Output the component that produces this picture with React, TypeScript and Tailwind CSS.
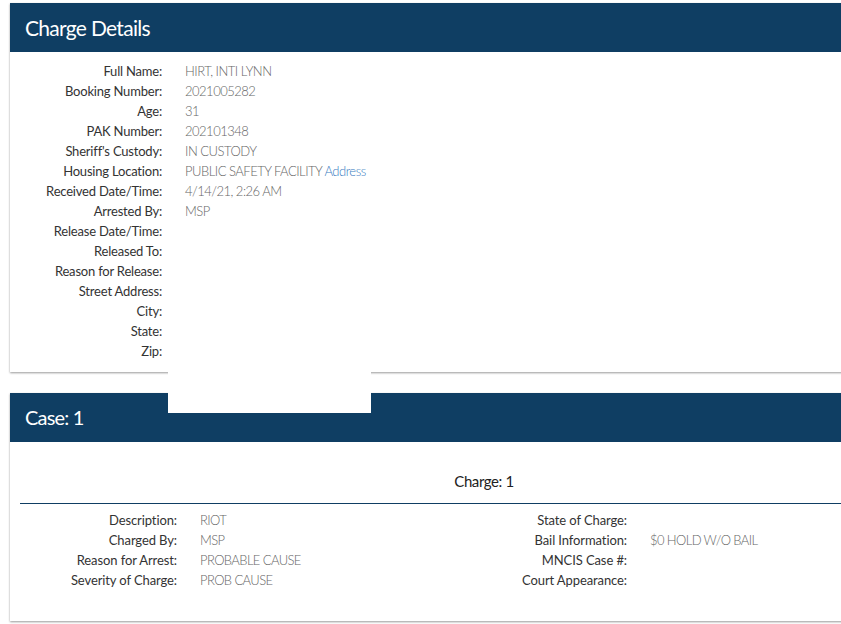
import React from "react";

const topRows: [string, React.ReactNode][] = [
  ["Full Name:", "HIRT, INTI LYNN"],
  ["Booking Number:", "2021005282"],
  ["Age:", "31"],
  ["PAK Number:", "202101348"],
  ["Sheriff's Custody:", "IN CUSTODY"],
  [
    "Housing Location:",
    <>
      PUBLIC SAFETY FACILITY <span className="text-[#3a7dbf]">Address</span>
    </>,
  ],
  ["Received Date/Time:", "4/14/21, 2:26 AM"],
  ["Arrested By:", "MSP"],
  ["Release Date/Time:", ""],
  ["Released To:", ""],
  ["Reason for Release:", ""],
  ["Street Address:", ""],
  ["City:", ""],
  ["State:", ""],
  ["Zip:", ""],
];

const leftRows: [string, string][] = [
  ["Description:", "RIOT"],
  ["Charged By:", "MSP"],
  ["Reason for Arrest:", "PROBABLE CAUSE"],
  ["Severity of Charge:", "PROB CAUSE"],
];
const rightRows: [string, string][] = [
  ["State of Charge:", ""],
  ["Bail Information:", "$0 HOLD W/O BAIL"],
  ["MNCIS Case #:", ""],
  ["Court Appearance:", ""],
];

export default function App() {
  return (
    <div
      className="relative w-[841px] h-[624px] overflow-hidden bg-white pt-[3px]"
      style={{ fontFamily: "Lato, 'Noto Sans', sans-serif" }}
    >
      {/* Panel 1 */}
      <div className="ml-[10px] w-[948px] bg-white shadow-[0_1px_2px_rgba(0,0,0,0.4)]">
        <div className="h-[49px] bg-[#0f3e63] flex items-center pl-[15px]">
          <span className="text-white text-[21px] tracking-[-0.7px]">Charge Details</span>
        </div>
        <div className="pt-[10px] pb-[10px]">
          {topRows.map(([l, v], i) => (
            <div key={i} className="flex h-[20px] items-center text-[13px]">
              <div className="w-[152px] text-right text-[#333] tracking-[-0.2px]">{l}</div>
              <div className="ml-[23px] text-[#666] font-light tracking-[-0.5px]">{v}</div>
            </div>
          ))}
        </div>
      </div>

      {/* Panel 2 */}
      <div className="ml-[10px] mt-[21px] w-[948px] bg-white shadow-[0_1px_2px_rgba(0,0,0,0.4)]">
        <div className="h-[49px] bg-[#0f3e63] flex items-center pl-[15px]">
          <span className="text-white text-[20px] tracking-[-0.8px] -mt-[1px]">Case: 1</span>
        </div>
        <div className="px-[10px] pt-[29px] pb-[30px]">
          <div className="h-[21px] flex items-center justify-center text-[15px] text-[#222] tracking-[-0.4px]">
            Charge: 1
          </div>
          <div className="mt-[11px] border-t border-[#0f3e63]" />
          <div className="flex pt-[7px]">
            <div className="w-[464px]">
              {leftRows.map(([l, v], i) => (
                <div key={i} className="flex h-[20px] items-center text-[13px]">
                  <div className="w-[157px] text-right text-[#333] tracking-[-0.1px]">{l}</div>
                  <div className="ml-[23px] text-[#666] font-light tracking-[-0.6px]">{v}</div>
                </div>
              ))}
            </div>
            <div className="w-[464px]">
              {rightRows.map(([l, v], i) => (
                <div key={i} className="flex h-[20px] items-center text-[13px]">
                  <div className="w-[143px] text-right text-[#333] tracking-[-0.1px]">{l}</div>
                  <div className="ml-[23px] text-[#666] font-light tracking-[-0.6px]">{v}</div>
                </div>
              ))}
            </div>
          </div>
        </div>
      </div>

      {/* White overlay box */}
      <div className="absolute left-[168px] top-[362px] w-[203px] h-[51px] bg-white" />
    </div>
  );
}
